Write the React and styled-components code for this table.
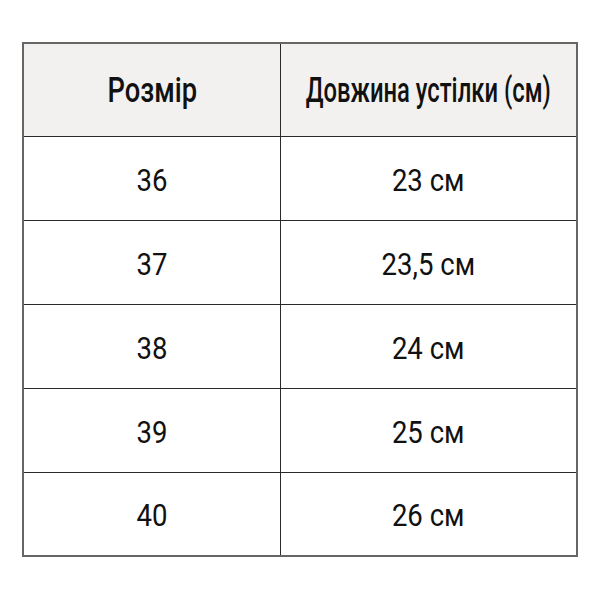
import React from "react";
import styled, { createGlobalStyle } from "styled-components";

const Global = createGlobalStyle`
  html, body { margin: 0; padding: 0; background: #ffffff; }
  body { font-family: Roboto, "Noto Sans", "Liberation Sans", sans-serif; color: #111; }
`;

const Page = styled.div`
  width: 600px;
  height: 600px;
  padding: 42px 0 0 22px;
  box-sizing: border-box;
`;

const Table = styled.div`
  display: grid;
  grid-template-columns: 257px 295px;
  grid-template-rows: 93px repeat(4, 84px) 82px;
  width: 556px;
  box-sizing: border-box;
  border: 2px solid #666;
`;

const Cell = styled.div`
  display: flex;
  align-items: center;
  justify-content: center;
  box-sizing: border-box;
  background: ${(p) => (p.$head ? "#f2f1ef" : "#ffffff")};
  border-right: ${(p) => (p.$last ? "none" : "1px solid #2a2a2a")};
  border-bottom: ${(p) => (p.$bottom ? "none" : "1px solid #2a2a2a")};
`;

const Label = styled.span`
  display: inline-block;
  white-space: nowrap;
  font-size: ${(p) => (p.$head ? "35px" : "32px")};
  font-weight: ${(p) => (p.$head ? 500 : 400)};
  line-height: 1;
  color: #111;
  transform: scaleX(${(p) => p.$squeeze || 0.86});
  margin-top: ${(p) => (p.$head ? "0px" : "2px")};
`;

const rows = [
  ["36", "23 см"],
  ["37", "23,5 см"],
  ["38", "24 см"],
  ["39", "25 см"],
  ["40", "26 см"],
];

export default function App() {
  return (
    <>
      <Global />
      <Page>
        <Table>
          <Cell $head>
            <Label $head $squeeze={0.78}>Розмір</Label>
          </Cell>
          <Cell $head $last>
            <Label $head $squeeze={0.68}>Довжина устілки (см)</Label>
          </Cell>
          {rows.map(([size, len], i) => {
            const bottom = i === rows.length - 1;
            return (
              <React.Fragment key={size}>
                <Cell $bottom={bottom}>
                  <Label>{size}</Label>
                </Cell>
                <Cell $bottom={bottom} $last>
                  <Label>{len}</Label>
                </Cell>
              </React.Fragment>
            );
          })}
        </Table>
      </Page>
    </>
  );
}
